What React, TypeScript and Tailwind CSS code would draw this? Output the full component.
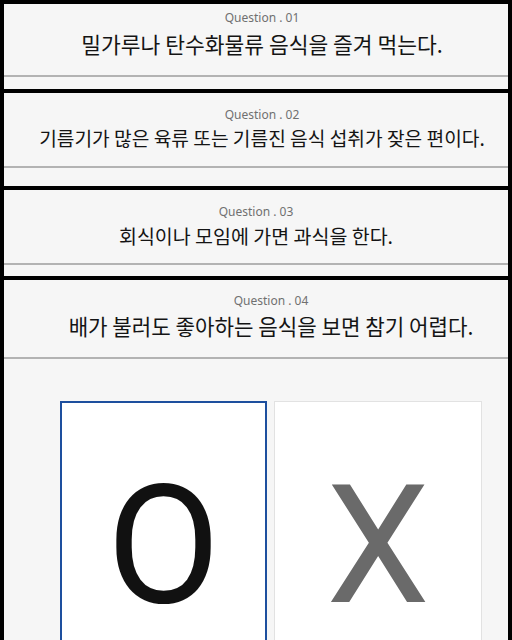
const questions = [
  {
    no: "01",
    text: "밀가루나 탄수화물류 음식을 즐겨 먹는다.",
    pad: "pt-[6px] pb-[12px]",
    shift: "pl-[12px]",
    gap: "mt-[4px]",
    size: "text-[21.5px]",
    line: "mt-[17px]",
  },
  {
    no: "02",
    text: "기름기가 많은 육류 또는 기름진 음식 섭취가 잦은 편이다.",
    pad: "pt-[14px] pb-[18px]",
    shift: "pl-[12px]",
    gap: "mt-[1px]",
    size: "text-[19.2px]",
    line: "mt-[14px]",
  },
  {
    no: "03",
    text: "회식이나 모임에 가면 과식을 한다.",
    pad: "pt-[14px] pb-[11px]",
    shift: "pl-0",
    gap: "mt-[2px]",
    size: "text-[19.5px]",
    line: "mt-[13px]",
  },
];

function Head({ no, text, gap, shift, size }: { no: string; text: string; gap: string; shift: string; size: string }) {
  return (
    <div className={shift}>
      <div className="h-4 text-center font-['Noto_Sans',sans-serif] text-[12px] leading-4 text-[#707070]">
        Question . {no}
      </div>
      <div
        className={`${gap} ${size} h-7 text-center font-['Noto_Sans_CJK_KR',sans-serif] leading-7 whitespace-nowrap text-[#141414]`}
      >
        {text}
      </div>
    </div>
  );
}

export default function App() {
  return (
    <div className="flex h-[640px] flex-col gap-1 overflow-hidden bg-black px-1 pt-1">
      {questions.map((q) => (
        <section key={q.no} className={`bg-[#f6f6f6] ${q.pad}`}>
          <Head no={q.no} text={q.text} gap={q.gap} shift={q.shift} size={q.size} />
          <div className={`${q.line} h-[2px] bg-[#b3b3b3]`} />
        </section>
      ))}

      <section className="flex-1 bg-[#f6f6f6] pt-[13px]">
        <Head
          no="04"
          text="배가 불러도 좋아하는 음식을 보면 참기 어렵다."
          gap="mt-[3px]"
          shift="pl-[30px]"
          size="text-[21.2px]"
        />
        <div className="mt-[17px] h-[2px] bg-[#b3b3b3]" />
        <div className="mt-[42px] flex justify-center gap-[7px] pl-[30px]">
          <button className="h-[260px] w-[207px] border-2 border-[#1d4f9e] bg-white pt-[28px] text-center font-['Roboto',sans-serif] text-[165px] leading-none text-[#111]">
            O
          </button>
          <button className="h-[260px] w-[208px] border border-[#e2e2e2] bg-white pt-[29px] text-center font-['Roboto',sans-serif] text-[165px] leading-none text-[#6a6a6a]">
            X
          </button>
        </div>
      </section>
    </div>
  );
}
